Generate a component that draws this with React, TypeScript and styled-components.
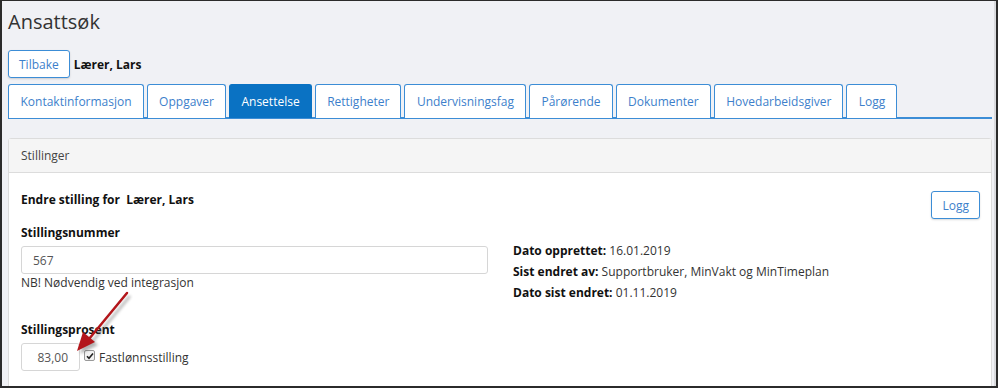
import React from 'react'
import styled, { createGlobalStyle } from 'styled-components'

const GlobalStyle = createGlobalStyle`
  html, body {
    margin: 0;
    padding: 0;
    background: #ffffff;
  }
  body {
    font-family: 'Open Sans', 'Noto Sans', sans-serif;
    font-size: 12px;
    color: #333;
  }
`

const Frame = styled.div`
  position: relative;
  box-sizing: border-box;
  width: 998px;
  height: 388px;
  overflow: hidden;
  border-top: 1px solid #2b2b2b;
  border-left: 2px solid #2b2b2b;
  border-right: 2px solid #2b2b2b;
  border-bottom: 2px solid #2b2b2b;
  background: #f0f1f5;
`

const Page = styled.div`
  box-sizing: border-box;
  height: 100%;
  padding: 0 2px 0 6px;
  border-right: 2px solid #d9dadd;
`

const Title = styled.h1`
  margin: 0;
  padding-top: 6px;
  height: 49px;
  box-sizing: border-box;
  font-size: 20px;
  font-weight: 400;
  color: #333;
  line-height: 30px;
`

const NameRow = styled.div`
  display: flex;
  align-items: center;
  gap: 4px;
  height: 28px;
`

const Button = styled.button`
  box-sizing: border-box;
  height: 28px;
  padding: 0 10px;
  font-family: inherit;
  font-size: 12px;
  color: #3d7fcb;
  background: #fff;
  border: 1px solid #3c8dd6;
  border-radius: 3px;
  box-shadow: 0 1px 2px rgba(0, 0, 0, 0.15);
`

const Name = styled.span`
  font-weight: 700;
  color: #111;
`

const Tabs = styled.div`
  display: flex;
  gap: 3px;
  margin-top: 6px;
  height: 35px;
  box-sizing: border-box;
  border-bottom: 2px solid #3c8dd6;
`

const Tab = styled.div<{ $active?: boolean }>`
  box-sizing: border-box;
  height: 34px;
  display: flex;
  align-items: center;
  padding: 0 11px 0 11.5px;
  background: ${p => (p.$active ? '#0a72c3' : '#fff')};
  color: ${p => (p.$active ? '#fff' : '#3d7fcb')};
  border: 1px solid ${p => (p.$active ? '#0a72c3' : '#3c8dd6')};
  border-bottom: none;
  border-radius: 3px 3px 0 0;
`

const Panel = styled.div`
  margin-top: 19px;
  background: #fff;
  border: 1px solid #dcdcdc;
  border-radius: 3px;
  height: 260px;
`

const PanelHeader = styled.div`
  height: 33px;
  display: flex;
  align-items: center;
  padding: 0 12px;
  background: #f5f5f5;
  border-bottom: 1px solid #dcdcdc;
  color: #444;
`

const PanelBody = styled.div`
  padding: 18px 11px 0 12px;
`

const TopRow = styled.div`
  display: flex;
  justify-content: space-between;
  align-items: flex-start;
`

const Heading = styled.div`
  font-weight: 700;
  color: #111;
  line-height: 18px;
`

const Columns = styled.div`
  display: flex;
  gap: 25px;
  margin-top: 4px;
`

const LeftCol = styled.div`
  width: 467px;
`

const RightCol = styled.div`
  padding-top: 17px;
  display: flex;
  flex-direction: column;
`

const Label = styled.div`
  font-weight: 700;
  color: #111;
  line-height: 20px;
  margin-bottom: 3px;
`

const TextInput = styled.div<{ $width?: number; $right?: boolean }>`
  box-sizing: border-box;
  width: ${p => (p.$width ? `${p.$width}px` : '100%')};
  height: 28px;
  display: flex;
  align-items: center;
  justify-content: ${p => (p.$right ? 'flex-end' : 'flex-start')};
  padding: 0 11px;
  border: 1px solid #d6d6d6;
  border-radius: 3px;
  color: #555;
`

const Help = styled.div`
  color: #333;
  line-height: 18px;
`

const Info = styled.div`
  line-height: 21px;
  color: #333;
  b {
    color: #111;
  }
`

const Section = styled.div<{ $top?: number }>`
  margin-top: ${p => p.$top ?? 0}px;
`

const CheckRow = styled.div`
  display: flex;
  align-items: center;
  gap: 4px;
`

const Check = styled.span`
  box-sizing: border-box;
  width: 11px;
  height: 11px;
  border: 1px solid #999;
  border-radius: 2px;
  background: #f2f2f2;
  display: inline-flex;
  align-items: center;
  justify-content: center;
  margin-top: -3px;
`

const Arrow = styled.svg`
  position: absolute;
  left: 60px;
  top: 280px;
  overflow: visible;
`

export default function App() {
  const tabs = [
    'Kontaktinformasjon',
    'Oppgaver',
    'Ansettelse',
    'Rettigheter',
    'Undervisningsfag',
    'Pårørende',
    'Dokumenter',
    'Hovedarbeidsgiver',
    'Logg',
  ]
  return (
    <>
      <GlobalStyle />
      <Frame>
        <Page>
          <Title>Ansattsøk</Title>
          <NameRow>
            <Button>Tilbake</Button>
            <Name>Lærer, Lars</Name>
          </NameRow>
          <Tabs>
            {tabs.map(t => (
              <Tab key={t} $active={t === 'Ansettelse'}>
                {t}
              </Tab>
            ))}
          </Tabs>
          <Panel>
            <PanelHeader>Stillinger</PanelHeader>
            <PanelBody>
              <TopRow>
                <Heading>Endre stilling for &nbsp;Lærer, Lars</Heading>
                <Button>Logg</Button>
              </TopRow>
              <Columns>
                <LeftCol>
                  <Label>Stillingsnummer</Label>
                  <TextInput>567</TextInput>
                  <Help>NB! Nødvendig ved integrasjon</Help>
                </LeftCol>
                <RightCol>
                  <Info>
                    <b>Dato opprettet:</b> 16.01.2019
                  </Info>
                  <Info>
                    <b>Sist endret av:</b> Supportbruker, MinVakt og MinTimeplan
                  </Info>
                  <Info>
                    <b>Dato sist endret:</b> 01.11.2019
                  </Info>
                </RightCol>
              </Columns>
              <Section $top={17}>
                <Label>Stillingsprosent</Label>
                <CheckRow>
                  <TextInput $width={59} $right>
                    83,00
                  </TextInput>
                  <Check>
                    <svg width="8" height="8" viewBox="0 0 8 8">
                      <path d="M1 4.2 L3 6.3 L7 1.5" fill="none" stroke="#222" strokeWidth="1.6" />
                    </svg>
                  </Check>
                  <span>Fastlønnsstilling</span>
                </CheckRow>
              </Section>
            </PanelBody>
          </Panel>
        </Page>
        <Arrow width="80" height="80" viewBox="0 0 80 80">
          <defs>
            <filter id="sh" x="-50%" y="-50%" width="200%" height="200%">
              <feGaussianBlur stdDeviation="1.5" />
            </filter>
          </defs>
          <g transform="translate(3,3)" opacity="0.45" filter="url(#sh)">
            <line x1="65" y1="12" x2="27" y2="58" stroke="#555" strokeWidth="2.5" />
            <polygon points="15,70 21,51 33,61" fill="#555" />
          </g>
          <line x1="65" y1="12" x2="27" y2="58" stroke="#b3161b" strokeWidth="2.5" strokeLinecap="round" />
          <polygon points="15,70 21,51 33,61" fill="#b3161b" />
        </Arrow>
      </Frame>
    </>
  )
}
